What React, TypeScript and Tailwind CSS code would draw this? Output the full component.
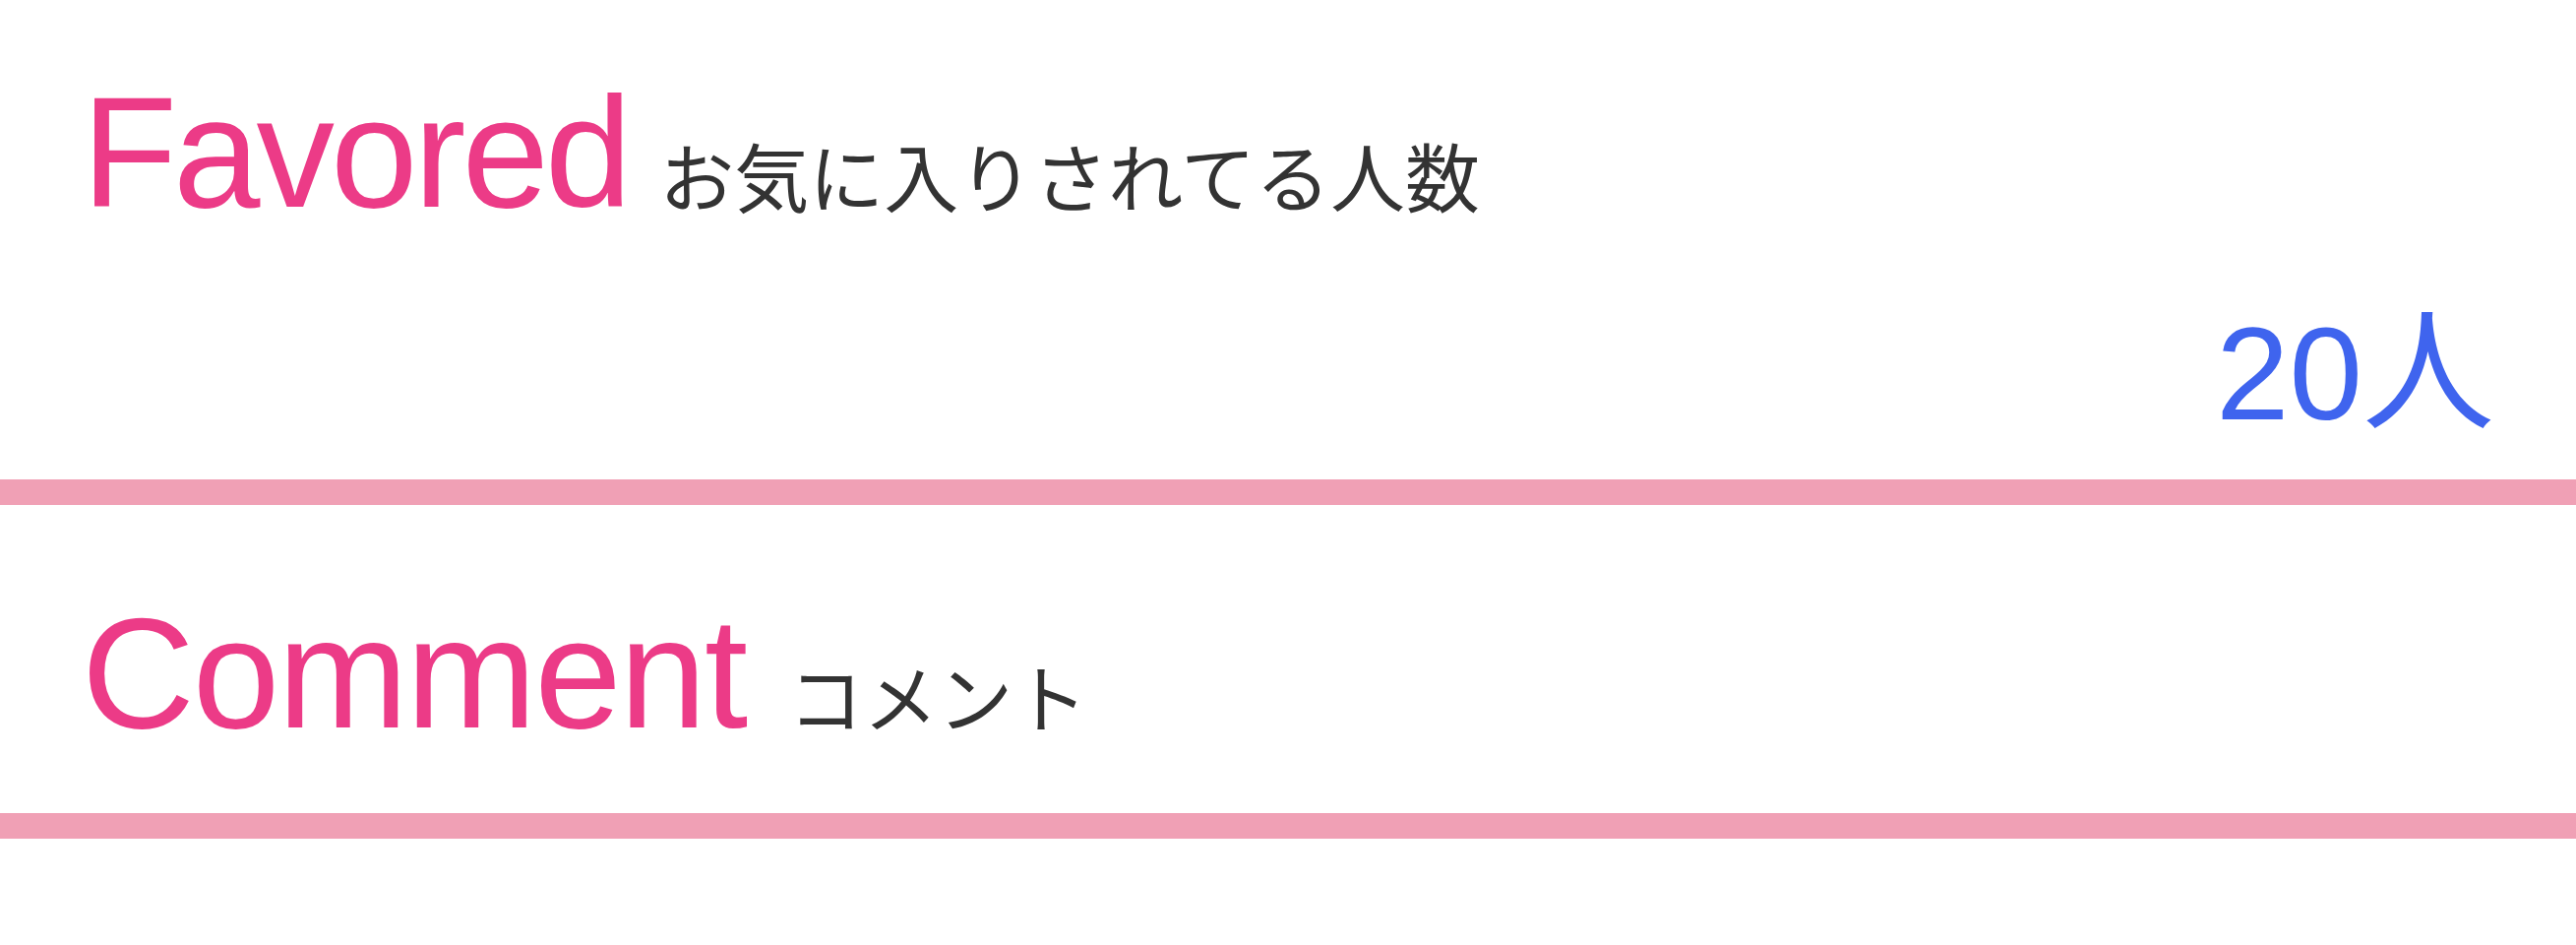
export default function App() {
  const latin = "font-['Liberation_Sans','Noto_Sans_CJK_JP',sans-serif]";
  const jp = "font-['Noto_Sans_CJK_JP',sans-serif]";

  return (
    <div className="min-h-screen w-full bg-white">
      {/* Favored */}
      <section className="flex flex-col px-[83px] pt-[76px] pb-[40px]">
        <div className="flex items-baseline">
          <h2 className={`${latin} text-[159px] leading-none tracking-[-4px] text-[#ec3b87]`}>Favored</h2>
          <span className={`${jp} ml-[32px] text-[76px] leading-none text-[#333333]`}>
            お気に入りされてる人数
          </span>
        </div>
        <p className={`${latin} mt-[78px] text-right text-[134px] leading-none text-[#3f64ee]`}>20人</p>
      </section>
      <div className="h-[26px] w-full bg-[#f0a0b5]" />

      {/* Comment */}
      <section className="flex flex-col px-[83px] pt-[92px] pb-[62px]">
        <div className="flex items-baseline">
          <h2 className={`${latin} text-[159px] leading-none tracking-[-2px] text-[#ec3b87]`}>Comment</h2>
          <span className={`${jp} ml-[43px] text-[76px] leading-none text-[#333333]`}>コメント</span>
        </div>
      </section>
      <div className="h-[26px] w-full bg-[#f0a0b5]" />
    </div>
  );
}
